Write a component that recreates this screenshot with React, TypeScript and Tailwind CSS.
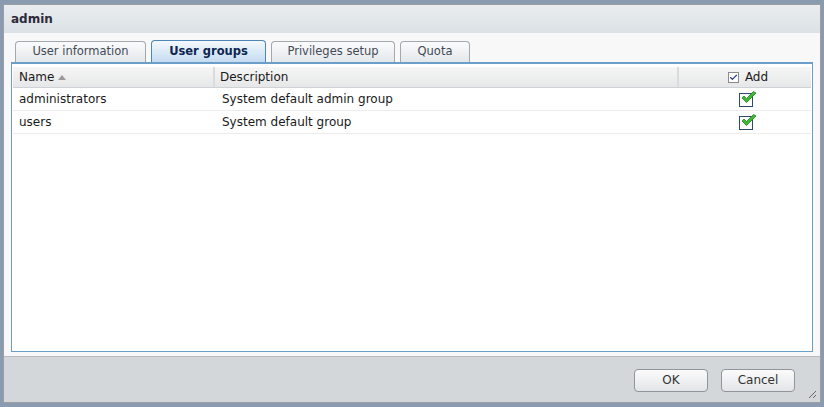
import { Check } from "lucide-react";

const font = { fontFamily: '"DejaVu Sans", Verdana, sans-serif' };

const tabs = [
  { label: "User information", w: "w-[131px]" },
  { label: "User groups", w: "w-[115px]", active: true },
  { label: "Privileges setup", w: "w-[124px]" },
  { label: "Quota", w: "w-[70px]" },
];

const rows = [
  { name: "administrators", desc: "System default admin group" },
  { name: "users", desc: "System default group" },
];

function GreenCheck() {
  return (
    <span className="relative flex size-[14px] items-center justify-center border border-[#2d4a6b] bg-white">
      <svg viewBox="0 0 16 14" className="absolute -top-[4px] left-[1px] h-[15px] w-[16px]">
        <path d="M1 7.5 L5.5 12 L15 2.5 L12.5 1 L5.5 8 L3 5.5 Z" fill="#3cb832" stroke="#1f8a1c" strokeWidth="0.8" strokeLinejoin="round" />
      </svg>
    </span>
  );
}

export default function App() {
  return (
    <div className="h-[407px] w-[824px] bg-[#8a9bb0] p-[3px] pb-[4px] pt-[4px]" style={font}>
      <div className="flex h-full flex-col overflow-hidden rounded-[2px] border border-[#9a9ea3] bg-[#f8f8f8]">
        <div className="flex h-[28px] items-center bg-gradient-to-b from-[#e9edf0] to-[#dbe1e5] px-[7px] text-[12px] font-bold text-[#2e2a3a]">
          admin
        </div>

        <div className="flex flex-1 flex-col px-[7px] pb-[4px] pt-[7px]">
          <div className="flex h-[22px] items-end gap-[5px] pl-[4px]">
            {tabs.map((t) =>
              t.active ? (
                <div
                  key={t.label}
                  className={`${t.w} -mb-px flex h-[23px] items-center justify-center rounded-t-[4px] border border-b-0 border-[#4f86b8] bg-gradient-to-b from-[#f4f9fd] to-[#c3daf0] text-[11.5px] font-bold text-[#0c2652]`}
                >
                  {t.label}
                </div>
              ) : (
                <div
                  key={t.label}
                  className={`${t.w} flex h-[21px] items-center justify-center rounded-t-[4px] border border-b-0 border-[#a3a8ad] bg-gradient-to-b from-[#fafbfc] to-[#e4e8eb] text-[11.5px] text-[#444a55]`}
                >
                  {t.label}
                </div>
              )
            )}
          </div>

          <div className="flex flex-1 flex-col border border-t-2 border-[#6b9fc9] bg-white pl-[1px] pr-[1px] pt-[3px]">
            <div className="flex h-[21px] border-b border-[#cfd2d5] bg-gradient-to-b from-[#f6f6f6] to-[#e6e7e8] text-[12px] text-[#1a1a1a]">
              <div className="flex w-[202px] items-center gap-[4px] border-r-2 border-[#d9dbdd] pl-[6px]">
                Name
                <svg viewBox="0 0 8 5" className="h-[5px] w-[8px]">
                  <path d="M0 5 L4 0 L8 5 Z" fill="#9a9a9a" />
                </svg>
              </div>
              <div className="flex w-[464px] items-center border-r-2 border-[#d9dbdd] pl-[5px]">Description</div>
              <div className="flex flex-1 items-center justify-center gap-[6px] pl-[6px]">
                <span className="flex size-[11px] items-center justify-center border border-[#8a8a8a] bg-white">
                  <Check className="size-[9px] text-[#2b3b8f]" strokeWidth={3} />
                </span>
                Add
              </div>
            </div>
            {rows.map((r) => (
              <div key={r.name} className="flex h-[23px] border-b border-[#ececec] text-[12px] text-[#1a1a1a]">
                <div className="flex w-[202px] items-center pl-[6px]">{r.name}</div>
                <div className="flex w-[464px] items-center pl-[7px]">{r.desc}</div>
                <div className="flex flex-1 items-center justify-center pl-[1px] pt-[2px]">
                  <GreenCheck />
                </div>
              </div>
            ))}
          </div>
        </div>

        <div className="relative flex h-[46px] items-center justify-end gap-[13px] border-t border-[#b8bcc0] bg-[#d3d7da] pr-[25px] pt-[1px]">
          <button className="h-[23px] w-[74px] rounded-[4px] border border-[#8f959b] bg-gradient-to-b from-[#fbfbfb] to-[#e2e5e8] text-[12px] text-[#333]">
            OK
          </button>
          <button className="h-[23px] w-[74px] rounded-[4px] border border-[#8f959b] bg-gradient-to-b from-[#fbfbfb] to-[#e2e5e8] text-[12px] text-[#333]">
            Cancel
          </button>
          <svg viewBox="0 0 10 10" className="absolute bottom-[3px] right-[3px] h-[10px] w-[10px]">
            <path d="M9 2 L2 9 M9 6 L6 9" stroke="#666" strokeWidth="1" />
          </svg>
        </div>
      </div>
    </div>
  );
}
